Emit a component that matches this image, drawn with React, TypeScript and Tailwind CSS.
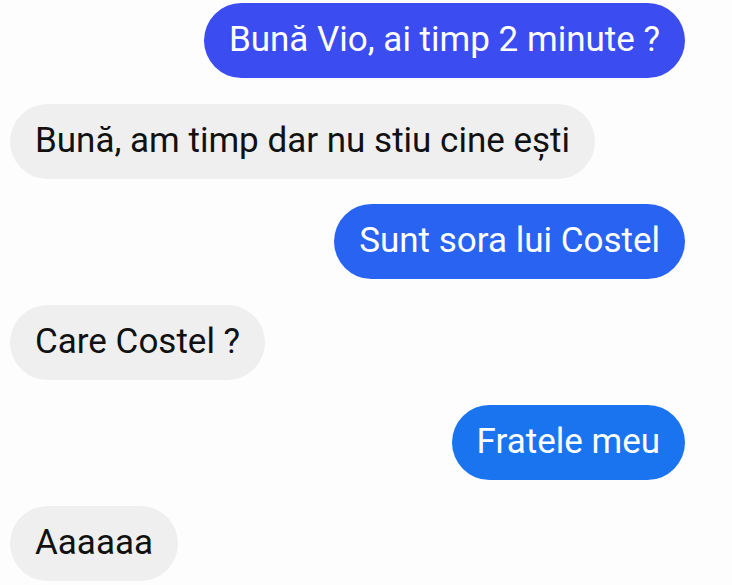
export default function App() {
  const font = { fontFamily: "Roboto, 'Noto Sans', sans-serif" };
  return (
    <div
      className="flex h-[585px] w-[732px] flex-col gap-[25.5px] overflow-hidden bg-[#fdfdfd] pl-[10px] pr-[47px] pt-[3px]"
      style={font}
    >
      {/* sent */}
      <div className="flex h-[75px] items-center self-end rounded-full bg-[#3b4cf1] px-[25px] text-[35px] text-white">
        Bună Vio, ai timp 2 minute ?
      </div>

      {/* received */}
      <div className="flex h-[75px] items-center self-start rounded-full bg-[#efefef] px-[25px] text-[35px] text-[#111]">
        Bună, am timp dar nu stiu cine ești
      </div>

      <div className="flex h-[75px] items-center self-end rounded-full bg-[#2963f1] px-[25px] text-[35px] text-white">
        Sunt sora lui Costel
      </div>

      <div className="flex h-[75px] items-center self-start rounded-full bg-[#efefef] px-[25px] text-[35px] text-[#111]">
        Care Costel ?
      </div>

      <div className="flex h-[75px] items-center self-end rounded-full bg-[#1a74ef] px-[25px] text-[35px] text-white">
        Fratele meu
      </div>

      <div className="flex h-[75px] items-center self-start rounded-full bg-[#efefef] px-[25px] text-[35px] text-[#111]">
        Aaaaaa
      </div>
    </div>
  );
}
